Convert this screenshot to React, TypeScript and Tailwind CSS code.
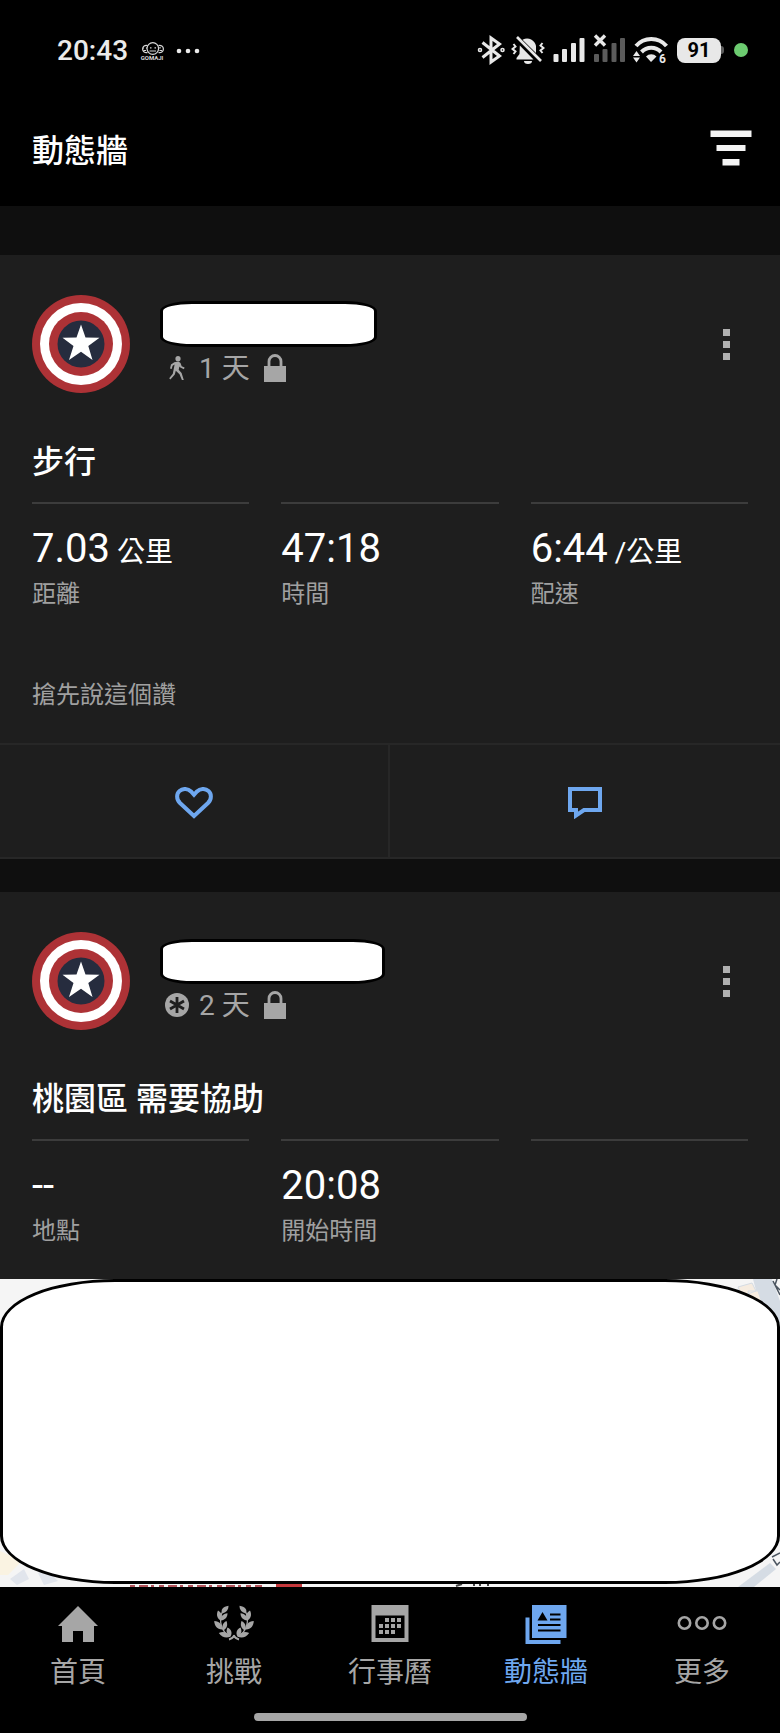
import type { ReactNode } from "react";

const Shield = () => (
  <svg viewBox="0 0 98 98" className="size-[98px] shrink-0" role="img" aria-label="avatar">
    <circle cx="49" cy="49" r="49" fill="#ad3236" />
    <circle cx="49" cy="49" r="41" fill="#fff" />
    <circle cx="49" cy="49" r="32" fill="#ad3236" />
    <circle cx="49" cy="49" r="23.5" fill="#262c3e" />
    <path
      d="M49 29.500L53.500 42.500L67.500 42.700L56.300 51L60.500 65L49 56.800L37 65L41.500 51L30.500 42.700L44.500 42.500Z"
      fill="#fff"
    />
  </svg>
);

const WalkIcon = () => (
  <svg viewBox="0 0 24 26" className="h-[26px] w-6" fill="#a6a6a6">
    <circle cx="13" cy="2.700" r="2.600" />
    <path d="M9.300 6.200L13.500 5.500L15.500 7L16.700 10.200L19.600 11.500L18.900 13.200L15.300 11.600L14.400 10.400L13.700 13.800L16.600 17L18.800 24H16.900L14.500 18.300L10.800 14.700L9.800 18.600L5.400 23.500L4.200 22.300L7.800 17.700L9.600 8.400L7.600 9.700L6.700 13L5 12.600L6 8.500Z" />
  </svg>
);

const AsteriskIcon = () => (
  <svg viewBox="0 0 24 26" className="h-[26px] w-6">
    <circle cx="12" cy="12" r="12" fill="#a6a6a6" />
    <path d="M12 4V20M5 8L19 16M19 8L5 16" stroke="#1e1e1e" strokeWidth="2.800" />
  </svg>
);

const LockIcon = () => (
  <svg viewBox="0 0 22 30" className="ml-1 h-[30px] w-[22px]">
    <rect y="12" width="22" height="16" fill="#a6a6a6" />
    <path d="M5 13V7.500a6 6 0 0 1 12 0V13" fill="none" stroke="#a6a6a6" strokeWidth="2.800" />
  </svg>
);

const StatusBar = () => (
  <div className="flex h-[100px] items-center justify-between pl-[57px] pr-8">
    <div className="flex items-center gap-3 pt-0.5">
      <span className="text-[28px] font-medium leading-8 text-[#ebebeb]">20:43</span>
      <div className="flex flex-col items-center">
        <svg viewBox="0 0 24 13" className="h-[13px] w-6" fill="none" stroke="#d8d8d8" strokeWidth="1.200">
          <circle cx="12.800" cy="6.500" r="5.800" />
          <path d="M7.500 3.500A3.700 3.700 0 1 0 7.500 10.500M18.500 3.500A3.700 3.700 0 1 1 18.500 10.500" />
          <path d="M10 5.800h1.500M14.500 5.800H16M9.500 9h6.500M3 6h1M6 6h1M3.500 8.500h2.500M20 5v1.500M19.500 8.500H22" />
        </svg>
        <span className="text-[6px] font-bold leading-[6px] text-[#d8d8d8]">GOMAJI</span>
      </div>
      <svg viewBox="0 0 24 6" className="h-[6px] w-6" fill="#ebebeb">
        <circle cx="3" cy="3" r="2.300" />
        <circle cx="12" cy="3" r="2.300" />
        <circle cx="21" cy="3" r="2.300" />
      </svg>
    </div>
    <div className="flex items-center">
      {/* bluetooth */}
      <svg viewBox="0 0 28 30" className="h-[30px] w-7" fill="none" stroke="#e8e8e8" strokeWidth="3">
        <path d="M5.500 7.500L22.500 21L14 27V3L22.500 9L5.500 22.500" />
        <circle cx="3" cy="15" r="0.800" />
        <circle cx="25.500" cy="15" r="0.800" />
      </svg>
      {/* muted bell */}
      <svg viewBox="0 0 34 30" className="ml-1.5 h-[30px] w-[34px]">
        <path d="M12 4.500A9 9 0 0 1 25 11V18L11.500 4.800ZM8.800 10.500L22.500 24.500H5.500V23L8.500 19Z" fill="#e8e8e8" />
        <path d="M13 26h8a4 3 0 0 1-8 0Z" fill="#e8e8e8" />
        <path d="M6 2L30 26" stroke="#e8e8e8" strokeWidth="2.600" />
        <path
          d="M2.500 9l2 2.500-3 2.500 3 2.500-2 2.500M31.500 8l-2 2.500 3 2.500-3 2.500 2 2.500"
          fill="none"
          stroke="#e8e8e8"
          strokeWidth="2"
        />
      </svg>
      {/* sim 1 */}
      <svg viewBox="0 0 32 26" className="ml-2 h-[26px] w-8" fill="#e8e8e8">
        <rect x="0.500" y="17" width="5" height="8" rx="1" />
        <rect x="9" y="12" width="5" height="13" rx="1" />
        <rect x="18" y="6" width="5" height="19" rx="1" />
        <rect x="26.500" y="1" width="5" height="24" rx="1" />
      </svg>
      {/* sim 2, no service */}
      <svg viewBox="0 0 32 30" className="mb-1 ml-2 h-[30px] w-8" fill="#5b5b5b">
        <rect x="1" y="21" width="5" height="8" rx="1" />
        <rect x="9.500" y="16" width="5" height="13" rx="1" />
        <rect x="18.500" y="10" width="5" height="19" rx="1" />
        <rect x="27" y="5" width="5" height="24" rx="1" />
        <path d="M2 2.500L12 12.500M12 2.500L2 12.500" stroke="#e8e8e8" strokeWidth="3.400" />
      </svg>
      {/* wifi 6 */}
      <svg viewBox="0 0 36 36" className="ml-2 mt-2 h-9 w-9">
        <g fill="none" stroke="#e8e8e8" strokeWidth="4">
          <path d="M3 10a20 20 0 0 1 30.500 0" />
          <path d="M8.500 16a13.500 13.500 0 0 1 19.500 0" />
        </g>
        <path d="M18 26L13 20.500a7 7 0 0 1 10.500 0ZM3.500 15l3.500 5H0ZM3.500 26.500l3.500-5H0Z" fill="#e8e8e8" />
        <text x="26" y="27" fill="#e8e8e8" fontSize="12" fontWeight="700" fontFamily="Roboto">
          6
        </text>
      </svg>
      <div className="ml-2 flex h-[25px] w-11 items-center justify-center rounded-lg bg-[#e8e8e8] text-[20px] font-bold leading-6 text-black">
        91
      </div>
      <div className="h-2 w-[3px] rounded-r-sm bg-[#5b5b5b]" />
      <div className="ml-[10px] size-[14px] rounded-full bg-[#6ccb70]" />
    </div>
  </div>
);

const Header = () => (
  <header className="bg-black">
    <StatusBar />
    <div className="flex h-[106px] items-center justify-between pb-5 pl-8 pr-7 pt-[10px]">
      <h1 className="pt-1.5 text-[32px] font-medium leading-10 text-white">動態牆</h1>
      <button type="button" aria-label="filter">
        <svg viewBox="0 0 42 36" className="h-9 w-[42px]" fill="#f4f4f4">
          <rect x="0.500" y="0.500" width="41" height="6.500" />
          <rect x="6.500" y="15" width="29" height="6" />
          <rect x="12.500" y="29" width="17" height="6.500" />
        </svg>
      </button>
    </div>
  </header>
);

type CardHeadProps = { icon: ReactNode; days: string; nameBox: string };

const CardHead = ({ icon, days, nameBox }: CardHeadProps) => (
  <div className="flex items-center px-8">
    <Shield />
    <div className="ml-[30px] flex flex-col gap-1">
      <div className={nameBox} />
      <div className="flex h-9 items-center gap-[10px] pl-[5px] text-[28px] leading-9 text-[#a6a6a6]">
        {icon}
        <span>{days}</span>
        <LockIcon />
      </div>
    </div>
    <button type="button" aria-label="more options" className="ml-auto flex flex-col gap-[5px] px-[18px] py-2">
      <span className="size-[7px] bg-[#b0b0b0]" />
      <span className="size-[7px] bg-[#b0b0b0]" />
      <span className="size-[7px] bg-[#b0b0b0]" />
    </button>
  </div>
);

type StatProps = { value?: string; unit?: string; label?: string };

const Stat = ({ value, unit, label }: StatProps) => (
  <div className="border-t-2 border-[#3c3c3c] pt-[21px]">
    <p className="h-12 text-[40px] leading-[48px] text-white">
      {value}
      {unit && <span className="text-[28px] leading-none"> {unit}</span>}
    </p>
    <p className="text-2xl leading-[42px] text-[#a0a0a0]">{label}</p>
  </div>
);

const WalkCard = () => (
  <article className="bg-[#1e1e1e] pt-10">
    <CardHead
      icon={<WalkIcon />}
      days="1 天"
      nameBox="h-[46px] w-[217px] rounded-[32px/10px] border-[3px] border-black bg-white"
    />
    <h2 className="mt-[49px] px-8 text-[32px] font-medium leading-10 text-white">步行</h2>
    <div className="mt-5 grid grid-cols-3 gap-8 px-8">
      <Stat value="7.03" unit="公里" label="距離" />
      <Stat value="47:18" label="時間" />
      <Stat value="6:44" unit="/公里" label="配速" />
    </div>
    <p className="mt-[60px] px-8 text-2xl leading-10 text-[#a0a0a0]">搶先說這個讚</p>
    <div className="mt-7 grid grid-cols-2 divide-x-2 divide-[#272727] border-y-2 border-[#272727]">
      <button type="button" aria-label="like" className="flex h-28 items-center justify-center pt-1">
        <svg viewBox="0 0 38 32" className="h-8 w-[38px]" fill="none" stroke="#6ea7ef" strokeWidth="4">
          <path d="M19 29L5 16C1 12 1.500 6.500 4.500 4C8 1 13 1.500 16 4.500L19 7.800L22 4.500C25 1.500 30 1 33.500 4C36.500 6.500 37 12 33 16Z" />
        </svg>
      </button>
      <button type="button" aria-label="comment" className="flex h-28 items-center justify-center pt-1">
        <svg viewBox="0 0 34 32" className="h-8 w-[34px]" fill="none" stroke="#6ea7ef" strokeWidth="4">
          <path d="M2 2H32V23H16L8 28.500V23H2Z" />
        </svg>
      </button>
    </div>
  </article>
);

const MapPreview = () => (
  <div className="relative h-[308px] overflow-hidden bg-[#f5f5f5]">
    <svg viewBox="0 0 780 308" preserveAspectRatio="none" className="absolute inset-0 size-full">
      <path d="M753 0H772L780 22V62L762 34Z" fill="#d5dce4" />
      <path d="M738 8l14-4 4 8-14 5ZM748 12h10l4 12-12-4Z" fill="#f6ece0" stroke="#d5dce4" />
      <path d="M773 2l7 14M777 0l-2 6 5 5" stroke="#4b5560" strokeWidth="1.500" fill="none" />
      <path d="M0 272L22 282L8 296H0Z" fill="#faf3e2" />
      <path d="M10 300l14-10 5 10-12 6ZM38 294l8-4 12 12-14 4Z" fill="#e1e5ec" />
      <path d="M738 308L770 284L776 290L754 308Z" fill="#d5dce4" />
      <path d="M773 280l4 6 3-3M772 278l8-4" stroke="#4b5560" strokeWidth="1.500" fill="none" />
      <path d="M130 307h132" stroke="#b3535a" strokeWidth="2" strokeDasharray="5 4 9 3 3 5" />
      <path d="M276 306h26" stroke="#c5383c" strokeWidth="4" />
      <path d="M456 307l6-2M474 307v-2M480 307v-2M488 307v-2" stroke="#444" strokeWidth="2" />
    </svg>
    <div className="absolute inset-x-0 bottom-[3px] top-0 rounded-[115px/48px] border-[3px] border-black bg-white" />
  </div>
);

const AssistCard = () => (
  <article className="mt-[33px] bg-[#1e1e1e] pt-10">
    <CardHead
      icon={<AsteriskIcon />}
      days="2 天"
      nameBox="h-[45px] w-[225px] rounded-[32px/10px] border-[3px] border-black bg-white"
    />
    <h2 className="mt-[49px] px-8 text-[32px] font-medium leading-10 text-white">桃園區 需要協助</h2>
    <div className="mb-[27px] mt-5 grid grid-cols-3 gap-8 px-8">
      <Stat value="--" label="地點" />
      <Stat value="20:08" label="開始時間" />
      <Stat />
    </div>
    <MapPreview />
  </article>
);

const HomeIcon = () => (
  <svg viewBox="0 0 40 40" className="size-10" fill="currentColor">
    <path d="M20 1L40 21H36V37H25V26H15V37H4V21H0Z" />
  </svg>
);

// one side of the wreath, mirrored for the other
const Branch = () => (
  <g>
    <path d="M14.500 0.700C9 1.500 6.500 4.500 8 8.500C12 7.500 14.500 5 14.500 0.700Z" />
    <path d="M4 5.500C2 9.500 3 13.500 6.800 15.500C9 11.500 8 8 4 5.500Z" />
    <path d="M13.500 8.300C9 9 6.500 11.500 6.800 15.500C11 15 13.500 12.500 13.500 8.300Z" />
    <path d="M0.200 16C0.500 21 3 24 8 24.500C8.500 19.500 5.500 16.500 0.200 16Z" />
    <path d="M12.500 16C8.500 18 7.500 21.500 9 25.500C13 23.500 14 20 12.500 16Z" />
    <path d="M4.800 28C8 32.500 12.500 33.500 16.500 31.500C14 27.500 9.500 26 4.800 28Z" />
    <path d="M13.500 22.500C11.500 26.500 13 30 16.500 31.500C18.500 28 17.500 24.500 13.500 22.500Z" />
    <path d="M8 7.500C4.500 16 7.500 27 16 31.500" fill="none" stroke="currentColor" strokeWidth="1.200" />
    <path d="M15 34.500C17.500 34 19 32.500 21 30.500" fill="none" stroke="currentColor" strokeWidth="2" />
  </g>
);

const WreathIcon = () => (
  <svg viewBox="0 0 40 40" className="size-10" fill="currentColor">
    <Branch />
    <g transform="matrix(-1 0 0 1 40 0)">
      <Branch />
    </g>
  </svg>
);

const CalendarIcon = () => (
  <svg viewBox="0 0 40 40" className="size-10" fill="currentColor">
    <path fillRule="evenodd" d="M1.500 0H38.500V37H1.500ZM5.500 10.500V33H34.500V10.500Z" />
    <path d="M15 13h4v4h-4zM21 13h4v4h-4zM27 13h4v4h-4zM9 19h4v4h-4zM15 19h4v4h-4zM21 19h4v4h-4zM27 19h4v4h-4zM9 25h4v4h-4zM15 25h4v4h-4zM21 25h4v4h-4z" />
  </svg>
);

const FeedIcon = () => (
  <svg viewBox="0 0 42 40" className="h-10 w-[42px]" fill="currentColor">
    <path d="M0.500 12.500H4.500V35H35.500V39H0.500Z" />
    <path d="M7 0H41.500V33H7Z" />
    <path d="M17.500 7L22.500 15.500H12.500Z" fill="#000" />
    <path d="M25 9.500H35.500M25 14.500H35.500M13 20H35.500M13 25.500H35.500" stroke="#000" strokeWidth="2" />
  </svg>
);

const MoreIcon = () => (
  <svg viewBox="0 0 50 40" className="h-10 w-[50px]" fill="none" stroke="currentColor" strokeWidth="2.600">
    <circle cx="7.500" cy="18" r="5.700" />
    <circle cx="25" cy="18" r="5.700" />
    <circle cx="42.500" cy="18" r="5.700" />
  </svg>
);

const tabs = [
  { label: "首頁", icon: <HomeIcon /> },
  { label: "挑戰", icon: <WreathIcon /> },
  { label: "行事曆", icon: <CalendarIcon /> },
  { label: "動態牆", icon: <FeedIcon />, active: true },
  { label: "更多", icon: <MoreIcon /> },
];

const TabBar = () => (
  <footer className="bg-black pb-3 pt-[18px]">
    <nav className="grid grid-cols-5">
      {tabs.map((tab) => (
        <a
          key={tab.label}
          href="#"
          className={`flex flex-col items-center gap-2 text-[28px] leading-10 ${tab.active ? "text-[#6ea7ef]" : "text-[#a6a6a6]"}`}
        >
          {tab.icon}
          {tab.label}
        </a>
      ))}
    </nav>
    <div className="mx-auto mt-5 h-2 w-[35%] rounded-full bg-[#a6a6a6]" />
  </footer>
);

export default function App() {
  return (
    <div className="min-h-screen bg-[#0f0f0f] font-['Roboto','Noto_Sans_CJK_TC',sans-serif]">
      <Header />
      <main className="pt-[49px]">
        <WalkCard />
        <AssistCard />
      </main>
      <TabBar />
    </div>
  );
}
